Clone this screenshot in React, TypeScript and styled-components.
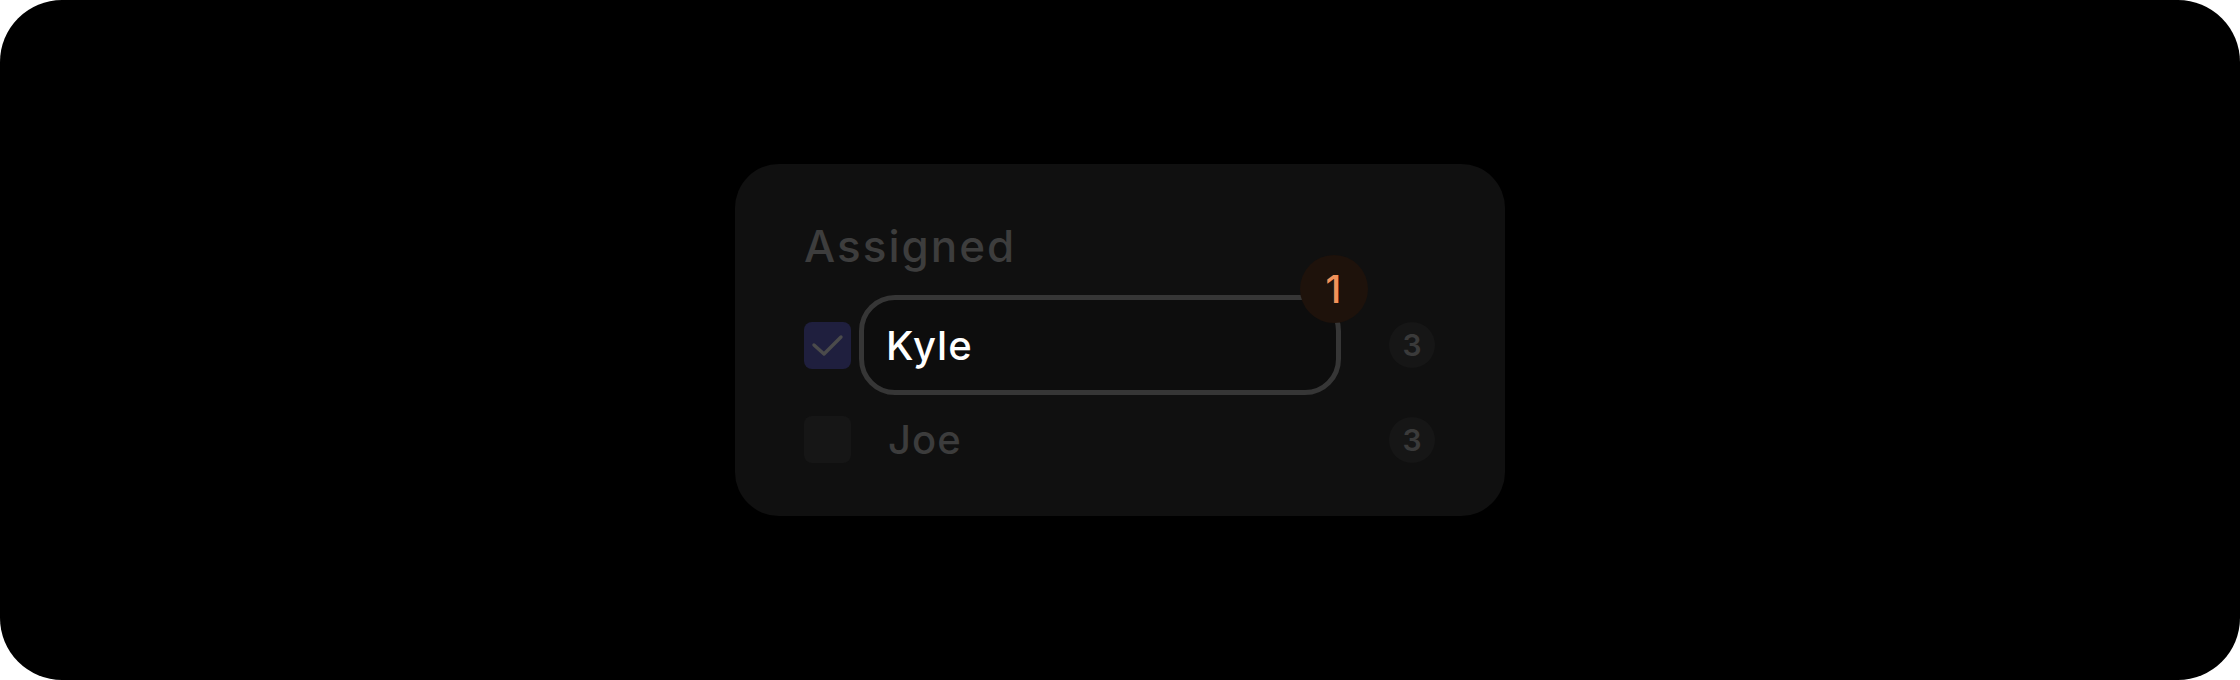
import styled, { createGlobalStyle } from "styled-components";

const GlobalSt = createGlobalStyle`
  html, body {
    margin: 0;
    padding: 0;
    background: #ffffff;
  }
  * {
    box-sizing: border-box;
  }
`;

const Frame = styled.div`
  width: 2240px;
  height: 680px;
  background: #000000;
  border-radius: 62px;
  display: flex;
  justify-content: center;
  align-items: center;
  font-family: "Inter", "Noto Sans", sans-serif;
`;

const Card = styled.div`
  width: 770px;
  height: 352px;
  background: #101010;
  border-radius: 44px;
  padding: 56px 70px 0 69px;
  display: flex;
  flex-direction: column;
`;

const Title = styled.h2`
  margin: 0;
  font-size: 44px;
  font-weight: 500;
  line-height: 52px;
  letter-spacing: 2px;
  color: #3d3d3d;
`;

const List = styled.div`
  margin-top: 23px;
  display: flex;
  flex-direction: column;
  gap: 21px;
`;

const Row = styled.div`
  display: flex;
  align-items: center;
`;

const Check = styled.div<{ $checked?: boolean }>`
  width: 47px;
  height: 47px;
  flex: none;
  border-radius: 8px;
  background: ${(p) => (p.$checked ? "#1f1f3e" : "#161616")};
  display: flex;
  align-items: center;
  justify-content: center;
`;

const NameBox = styled.div<{ $editing?: boolean }>`
  position: relative;
  width: 483px;
  margin-left: 8px;
  display: flex;
  align-items: center;
  font-size: 40px;
  font-weight: 500;
  letter-spacing: 1px;
  ${(p) =>
    p.$editing
      ? `
    height: 100px;
    padding-left: 22px;
    border: 5px solid #363636;
    border-radius: 36px;
    background: #0d0d0d;
    color: #ffffff;
  `
      : `
    height: 47px;
    padding-left: 29px;
    color: #3c3c3c;
  `}
`;

const Badge = styled.span`
  position: absolute;
  top: -45px;
  right: -32px;
  width: 68px;
  height: 68px;
  border-radius: 50%;
  background: #1e120b;
  color: #f2925a;
  font-size: 38px;
  font-weight: 500;
  display: flex;
  align-items: center;
  justify-content: center;
`;

const Count = styled.span`
  width: 46px;
  height: 46px;
  margin-left: 48px;
  flex: none;
  border-radius: 50%;
  background: #161616;
  color: #3a3a3a;
  font-size: 30px;
  font-weight: 600;
  display: flex;
  align-items: center;
  justify-content: center;
`;

const people = [
  { name: "Kyle", checked: true, editing: true, count: 3 },
  { name: "Joe", checked: false, editing: false, count: 3 },
];

const App = () => {
  return (
    <>
      <GlobalSt />
      <Frame>
        <Card>
          <Title>Assigned</Title>
          <List>
            {people.map((p) => (
              <Row key={p.name}>
                <Check $checked={p.checked}>
                  {p.checked && (
                    <svg width="47" height="47" viewBox="0 0 47 47" fill="none">
                      <polyline
                        points="10,23 20,32 37,15"
                        stroke="#4b4b4b"
                        strokeWidth="3.4"
                        strokeLinecap="round"
                        strokeLinejoin="round"
                      />
                    </svg>
                  )}
                </Check>
                <NameBox $editing={p.editing}>
                  {p.name}
                  {p.editing && <Badge>1</Badge>}
                </NameBox>
                <Count>{p.count}</Count>
              </Row>
            ))}
          </List>
        </Card>
      </Frame>
    </>
  );
};

export default App;
